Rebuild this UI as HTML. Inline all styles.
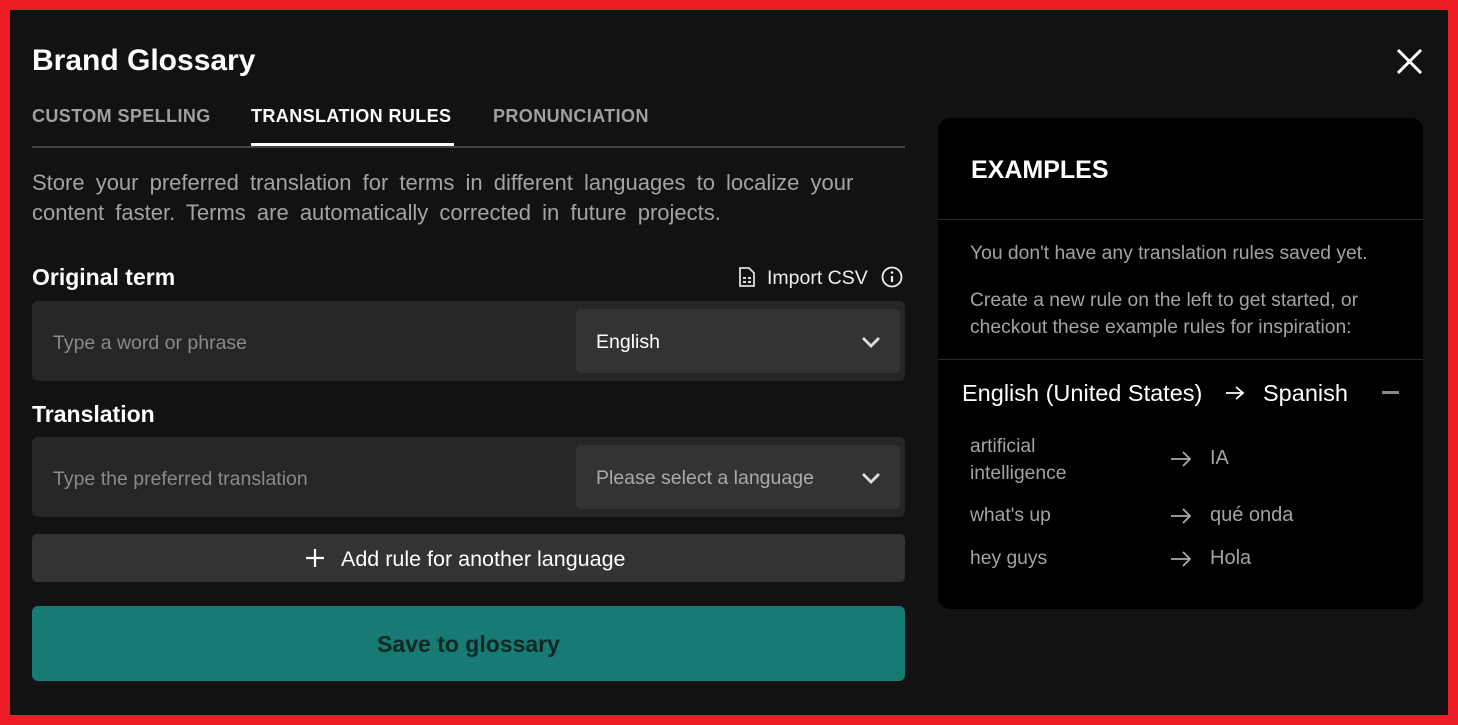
<!DOCTYPE html>
<html><head><meta charset="utf-8"><style>
*{box-sizing:border-box;margin:0;padding:0}
body{width:1458px;height:725px;background:#ee1c25;font-family:"Liberation Sans",sans-serif;position:relative;overflow:hidden}
.in{position:absolute;left:10px;top:10px;width:1438px;height:705px;background:#121212}
.a{position:absolute;white-space:nowrap}
.box{position:absolute;background:#262626;border-radius:6px}
.sel{position:absolute;background:#333;border-radius:5px;color:#fff;font-size:19.5px}
.g{color:#a3a3a3}
</style></head><body>
<div class="in"></div>
<div class="a" style="left:32px;top:44px;font-size:30px;font-weight:bold;color:#fff">Brand Glossary</div>
<svg class="a" style="left:1396px;top:48px" width="27" height="27" viewBox="0 0 27 27"><path d="M2 2L25 25M25 2L2 25" stroke="#fff" stroke-width="3"/></svg>
<div class="a" style="left:32px;top:106px;font-size:18px;font-weight:bold;color:#a0a0a0;letter-spacing:0.4px">CUSTOM SPELLING</div>
<div class="a" style="left:251px;top:106px;font-size:18px;font-weight:bold;color:#fff;letter-spacing:0.4px">TRANSLATION RULES</div>
<div class="a" style="left:493px;top:106px;font-size:18px;font-weight:bold;color:#a0a0a0;letter-spacing:0.4px">PRONUNCIATION</div>
<div class="a" style="left:32px;top:146px;width:873px;height:2px;background:#444"></div>
<div class="a" style="left:251px;top:143px;width:203px;height:3px;background:#fff"></div>
<div class="a g" style="left:32px;top:168px;font-size:22px;line-height:30px;white-space:normal;width:860px;word-spacing:5px">Store your preferred translation for terms in different languages to localize your content faster. Terms are automatically corrected in future projects.</div>
<div class="a" style="left:32px;top:264px;font-size:23px;font-weight:bold;color:#fff">Original term</div>
<svg class="a" style="left:738px;top:267px" width="18" height="21" viewBox="0 0 18 21"><path d="M2 1h9l5 5v13H2z" fill="none" stroke="#ddd" stroke-width="1.8"/><path d="M5 11h3M10 11h3M5 15h3M10 15h3" stroke="#ddd" stroke-width="2"/></svg>
<div class="a" style="left:767px;top:267px;font-size:19.5px;color:#eee">Import CSV</div>
<svg class="a" style="left:881px;top:266px" width="22" height="22" viewBox="0 0 22 22"><circle cx="11" cy="11" r="9.5" fill="none" stroke="#eee" stroke-width="1.8"/><path d="M11 10v6" stroke="#eee" stroke-width="2.2"/><circle cx="11" cy="6.5" r="1.3" fill="#eee"/></svg>
<div class="box" style="left:32px;top:301px;width:873px;height:80px"></div>
<div class="a" style="left:53px;top:332px;font-size:19.5px;color:#8a8a8a">Type a word or phrase</div>
<div class="sel" style="left:576px;top:309px;width:324px;height:64px"><span class="a" style="left:20px;top:22px">English</span><svg class="a" style="left:285px;top:27px" width="20" height="12"><path d="M2 2l8 8 8-8" fill="none" stroke="#ddd" stroke-width="2.8"/></svg></div>
<div class="a" style="left:32px;top:401px;font-size:23px;font-weight:bold;color:#fff">Translation</div>
<div class="box" style="left:32px;top:437px;width:873px;height:80px"></div>
<div class="a" style="left:53px;top:468px;font-size:19.5px;color:#8a8a8a">Type the preferred translation</div>
<div class="sel" style="left:576px;top:445px;width:324px;height:64px;color:#aaa"><span class="a" style="left:20px;top:22px">Please select a language</span><svg class="a" style="left:285px;top:27px" width="20" height="12"><path d="M2 2l8 8 8-8" fill="none" stroke="#ddd" stroke-width="2.8"/></svg></div>
<div class="a" style="left:32px;top:534px;width:873px;height:48px;background:#333;border-radius:5px"></div>
<svg class="a" style="left:305px;top:548px" width="20" height="20"><path d="M10 1v18M1 10h18" stroke="#fff" stroke-width="2.2"/></svg>
<div class="a" style="left:341px;top:547px;font-size:21.5px;color:#fff">Add rule for another language</div>
<div class="a" style="left:32px;top:606px;width:873px;height:75px;background:#177a73;border-radius:6px;text-align:center;line-height:76px;font-size:23px;font-weight:bold;color:#0f2826">Save to glossary</div>
<div class="a" style="left:938px;top:118px;width:485px;height:491px;background:#000;border-radius:12px"></div>
<div class="a" style="left:971px;top:156px;font-size:25px;font-weight:bold;color:#fff">EXAMPLES</div>
<div class="a" style="left:938px;top:219px;width:485px;height:1px;background:#2a2a2a"></div>
<div class="a g" style="left:970px;top:243px;font-size:19.3px">You don't have any translation rules saved yet.</div>
<div class="a g" style="left:970px;top:287px;font-size:19.3px;line-height:27px">Create a new rule on the left to get started, or<br>checkout these example rules for inspiration:</div>
<div class="a" style="left:938px;top:359px;width:485px;height:1px;background:#2a2a2a"></div>
<div class="a" style="left:962px;top:380px;font-size:23.5px;color:#fff">English (United States)</div>
<svg class="a" style="left:1225px;top:385px" width="20" height="16"><path d="M1 8h17M11 2l7 6-7 6" fill="none" stroke="#fff" stroke-width="1.8"/></svg>
<div class="a" style="left:1263px;top:380px;font-size:23.5px;color:#fff">Spanish</div>
<div class="a" style="left:1382px;top:391px;width:17px;height:3px;background:#888"></div>
<div class="a g" style="left:970px;top:433px;font-size:19.3px;line-height:27px">artificial<br>intelligence</div>
<div class="a g" style="left:1210px;top:447px;font-size:20px">IA</div>
<div class="a g" style="left:970px;top:505px;font-size:19.3px">what's up</div>
<div class="a g" style="left:1210px;top:504px;font-size:20px">qué onda</div>
<div class="a g" style="left:970px;top:548px;font-size:19.3px">hey guys</div>
<div class="a g" style="left:1210px;top:547px;font-size:20px">Hola</div>
<svg class="a" style="left:1170px;top:451px" width="22" height="16"><path d="M1 8h19M13 1l7 7-7 7" fill="none" stroke="#aaa" stroke-width="1.8"/></svg>
<svg class="a" style="left:1170px;top:508px" width="22" height="16"><path d="M1 8h19M13 1l7 7-7 7" fill="none" stroke="#aaa" stroke-width="1.8"/></svg>
<svg class="a" style="left:1170px;top:551px" width="22" height="16"><path d="M1 8h19M13 1l7 7-7 7" fill="none" stroke="#aaa" stroke-width="1.8"/></svg>
</body></html>
